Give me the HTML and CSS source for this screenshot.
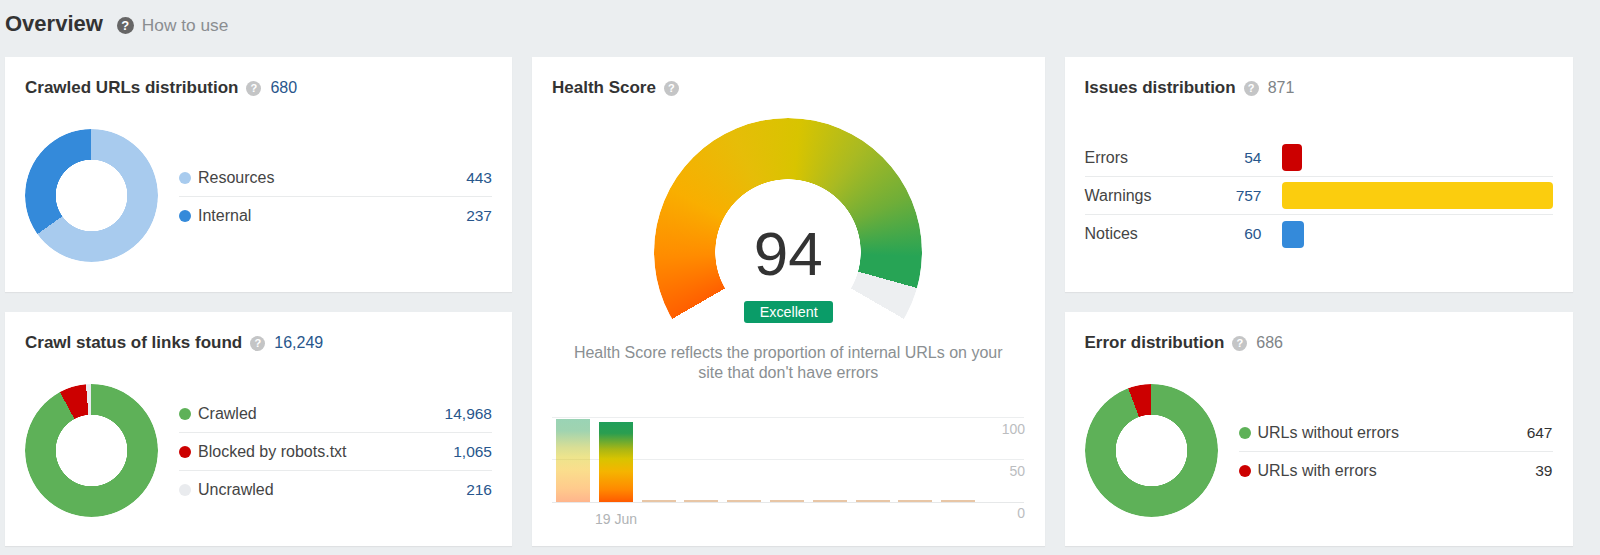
FILE: index.html
```html
<!DOCTYPE html>
<html lang="en">
<head>
    <meta charset="UTF-8">
    <title>Overview</title>
    <link rel="stylesheet" href="styles.css">
</head>
<body>
    <header class="page-head">
        <h1 class="page-title">Overview</h1>
        <a href="#" class="how-to">
            <span class="help help-dark">?</span>
            How to use
        </a>
    </header>

    <main class="board">
        <section class="card card-urls">
            <div class="card-head">
                <h2 class="card-title">Crawled URLs distribution</h2>
                <span class="help">?</span>
                <span class="count">680</span>
            </div>
            <div class="donut-row">
                <div class="donut donut-urls"></div>
                <ul class="legend">
                    <li class="legend-row"><i class="dot dot-light"></i><span class="legend-name">Resources</span><span class="num">443</span></li>
                    <li class="legend-row"><i class="dot dot-blue"></i><span class="legend-name">Internal</span><span class="num">237</span></li>
                </ul>
            </div>
        </section>

        <section class="card card-health">
            <div class="card-head">
                <h2 class="card-title">Health Score</h2>
                <span class="help">?</span>
            </div>
            <div class="gauge-area">
                <div class="gauge"></div>
                <div class="score">94</div>
                <div class="badge">Excellent</div>
            </div>
            <p class="health-text">Health Score reflects the proportion of internal URLs on your<br>site that don't have errors</p>
            <div class="chart">
                <div class="plot">
                    <div class="bar bar-old"></div>
                    <div class="bar bar-now"></div>
                    <div class="bar bar-empty"></div>
                    <div class="bar bar-empty"></div>
                    <div class="bar bar-empty"></div>
                    <div class="bar bar-empty"></div>
                    <div class="bar bar-empty"></div>
                    <div class="bar bar-empty"></div>
                    <div class="bar bar-empty"></div>
                    <div class="bar bar-empty"></div>
                    <div class="axis">
                        <span>100</span>
                        <span>50</span>
                        <span>0</span>
                    </div>
                </div>
                <div class="chart-date">19 Jun</div>
            </div>
        </section>

        <section class="card card-issues">
            <div class="card-head">
                <h2 class="card-title">Issues distribution</h2>
                <span class="help">?</span>
                <span class="count count-grey">871</span>
            </div>
            <ul class="issues">
                <li class="issue-row"><span class="issue-name">Errors</span><span class="num issue-num">54</span><div class="issue-track"><div class="issue-bar issue-errors"></div></div></li>
                <li class="issue-row"><span class="issue-name">Warnings</span><span class="num issue-num">757</span><div class="issue-track"><div class="issue-bar issue-warnings"></div></div></li>
                <li class="issue-row"><span class="issue-name">Notices</span><span class="num issue-num">60</span><div class="issue-track"><div class="issue-bar issue-notices"></div></div></li>
            </ul>
        </section>

        <section class="card card-links">
            <div class="card-head">
                <h2 class="card-title">Crawl status of links found</h2>
                <span class="help">?</span>
                <span class="count">16,249</span>
            </div>
            <div class="donut-row">
                <div class="donut donut-links"></div>
                <ul class="legend">
                    <li class="legend-row"><i class="dot dot-green"></i><span class="legend-name">Crawled</span><span class="num">14,968</span></li>
                    <li class="legend-row"><i class="dot dot-red"></i><span class="legend-name">Blocked by robots.txt</span><span class="num">1,065</span></li>
                    <li class="legend-row"><i class="dot dot-grey"></i><span class="legend-name">Uncrawled</span><span class="num">216</span></li>
                </ul>
            </div>
        </section>

        <section class="card card-errors">
            <div class="card-head">
                <h2 class="card-title">Error distribution</h2>
                <span class="help">?</span>
                <span class="count count-grey">686</span>
            </div>
            <div class="donut-row">
                <div class="donut donut-errors"></div>
                <ul class="legend">
                    <li class="legend-row"><i class="dot dot-green"></i><span class="legend-name">URLs without errors</span><span class="num num-dark">647</span></li>
                    <li class="legend-row"><i class="dot dot-red"></i><span class="legend-name">URLs with errors</span><span class="num num-dark">39</span></li>
                </ul>
            </div>
        </section>
    </main>
</body>
</html>
```

FILE: styles.css
```css
* {
    box-sizing: border-box;
    font-family: 'Liberation Sans', Arial, sans-serif;
}

body {
    margin: 0;
    background-color: #ebeef0;
    color: #333;
    height: 555px;
    overflow: hidden;
}

ul {
    margin: 0;
    padding: 0;
    list-style: none;
}

/* page header */
.page-head {
    display: flex;
    align-items: center;
    height: 57px;
    padding: 0 0 6px 5px;
}

.page-title {
    margin: 0 0 4px;
    font-size: 22px;
    font-weight: bold;
    color: #333;
}

.how-to {
    display: flex;
    align-items: center;
    gap: 8px;
    margin-left: 14px;
    font-size: 17.3px;
    color: #8a8d90;
    text-decoration: none;
}

.help {
    flex: none;
    display: flex;
    align-items: center;
    justify-content: center;
    width: 15px;
    height: 15px;
    margin-left: 8px;
    border-radius: 50%;
    background-color: #c4c5c6;
    color: #fff;
    font-size: 11px;
    font-weight: bold;
}

.help-dark {
    width: 17px;
    height: 17px;
    margin-left: 0;
    background-color: #666;
    font-size: 13px;
}

/* board */
.board {
    display: grid;
    grid-template-columns: 507px 512.5px 508px;
    grid-template-rows: 235px 234px;
    gap: 20px;
    padding-left: 5px;
}

.card {
    padding: 20px;
    background-color: #fff;
    box-shadow: 0 1px 1px rgba(0, 0, 0, 0.05);
}

.card-health {
    grid-column: 2;
    grid-row: 1 / 3;
}

.card-issues {
    grid-column: 3;
    grid-row: 1;
}

.card-links {
    grid-column: 1;
    grid-row: 2;
}

.card-errors {
    grid-column: 3;
    grid-row: 2;
}

.card-head {
    display: flex;
    align-items: center;
    height: 22px;
}

.card-title {
    margin: 0;
    font-size: 17px;
    font-weight: bold;
    color: #333;
}

.count {
    margin-left: 9px;
    font-size: 16px;
    color: #28568c;
}

.count-grey {
    color: #808487;
}

.num {
    font-size: 15.5px;
    color: #28568c;
}

.num-dark {
    color: #333;
}

/* donuts */
.donut-row {
    display: flex;
    align-items: center;
    gap: 21px;
    margin-top: 30px;
}

.donut {
    flex: none;
    width: 133px;
    height: 133px;
    border-radius: 50%;
    -webkit-mask: radial-gradient(circle, transparent 35.5px, #000 36px);
    mask: radial-gradient(circle, transparent 35.5px, #000 36px);
}

.donut-urls {
    background: conic-gradient(#a8cbee 0 234.5deg, #348ada 234.5deg 360deg);
}

.donut-links {
    background: conic-gradient(#5eb158 0 331.6deg, #cc0000 331.6deg 355.2deg, #e9ebee 355.2deg 360deg);
}

.donut-errors {
    background: conic-gradient(#5eb158 0 339.5deg, #cc0000 339.5deg 360deg);
}

.legend {
    flex: 1;
    margin-top: 3px;
}

.legend-row {
    display: flex;
    align-items: center;
    height: 38px;
    border-bottom: 1px solid #e9ebec;
}

.legend-row:last-child {
    border-bottom: none;
}

.legend-name {
    flex: 1;
    font-size: 16px;
    color: #444;
}

.dot {
    flex: none;
    width: 12px;
    height: 12px;
    margin-right: 7px;
    border-radius: 50%;
}

.dot-light { background-color: #a8cbee; }
.dot-blue { background-color: #348ada; }
.dot-green { background-color: #5eb158; }
.dot-red { background-color: #cc0000; }
.dot-grey { background-color: #e9ebee; }

/* health score */
.gauge-area {
    position: relative;
    width: 268px;
    height: 225px;
    margin: 19px auto 0;
}

.gauge {
    width: 268px;
    height: 268px;
    border-radius: 50%;
    background: conic-gradient(from 240deg,
        #ff5f00 0deg,
        #ff8c00 28deg,
        #f9ae00 58deg,
        #e6bd08 95deg,
        #d8c400 125deg,
        #a9ba22 155deg,
        #6fae38 185deg,
        #27a455 212deg,
        #27a455 225.6deg,
        #edeff1 225.6deg,
        #edeff1 240deg,
        transparent 240deg);
    -webkit-mask: radial-gradient(circle, transparent 72.5px, #000 73px);
    mask: radial-gradient(circle, transparent 72.5px, #000 73px);
}

.score {
    position: absolute;
    top: 98px;
    left: 0;
    width: 100%;
    font-size: 62px;
    line-height: 76px;
    text-align: center;
    color: #333;
}

.badge {
    position: absolute;
    top: 183px;
    left: 90px;
    width: 89px;
    height: 22px;
    border-radius: 3px;
    background-color: #0a9c68;
    color: #fff;
    font-size: 14.3px;
    line-height: 22px;
    text-align: center;
}

.health-text {
    margin: 0;
    font-size: 16px;
    line-height: 20px;
    text-align: center;
    color: #8a8f92;
}

/* score history */
.chart {
    margin-top: 34px;
}

.plot {
    position: relative;
    display: flex;
    align-items: flex-end;
    gap: 8.8px;
    width: 472px;
    height: 86px;
    padding-left: 4px;
    border-top: 1px solid #eceeef;
    border-bottom: 1px solid #e6e8e9;
    background: linear-gradient(#eceeef, #eceeef) 0 41px / 100% 1px no-repeat;
}

.bar {
    flex: none;
    width: 34px;
}

.bar-old,
.bar-now {
    background: linear-gradient(#1f9e5a 0%, #2a9e50 14%, #a9b614 34%, #d8c400 46%, #f5b400 62%, #ff8a00 84%, #ff5a00 100%);
}

.bar-old {
    height: 83px;
    opacity: 0.45;
}

.bar-now {
    height: 80px;
}

.bar-empty {
    height: 2px;
    background-color: #e8c6a6;
}

.axis {
    position: absolute;
    top: 0;
    right: -1px;
    display: flex;
    flex-direction: column;
    align-items: flex-end;
    padding-top: 3px;
    font-size: 14px;
    color: #bbbdbf;
}

.axis span {
    height: 42px;
    line-height: 16px;
}

.chart-date {
    width: 60px;
    margin: 8px 0 0 34px;
    font-size: 14px;
    line-height: 16px;
    text-align: center;
    color: #b0b3b5;
}

/* issues */
.issues {
    margin-top: 40px;
}

.issue-row {
    display: flex;
    align-items: center;
    height: 38px;
    border-bottom: 1px solid #e9ebec;
}

.issue-row:last-child {
    border-bottom: none;
}

.issue-name {
    width: 100px;
    font-size: 16px;
    color: #444;
}

.issue-num {
    width: 77px;
    text-align: right;
}

.issue-track {
    flex: 1;
    margin-left: 20px;
}

.issue-bar {
    height: 27px;
    border-radius: 4px;
}

.issue-errors {
    width: 20px;
    background-color: #cc0000;
}

.issue-warnings {
    width: 100%;
    background-color: #fbcd0e;
}

.issue-notices {
    width: 22px;
    background-color: #348ada;
}
```
